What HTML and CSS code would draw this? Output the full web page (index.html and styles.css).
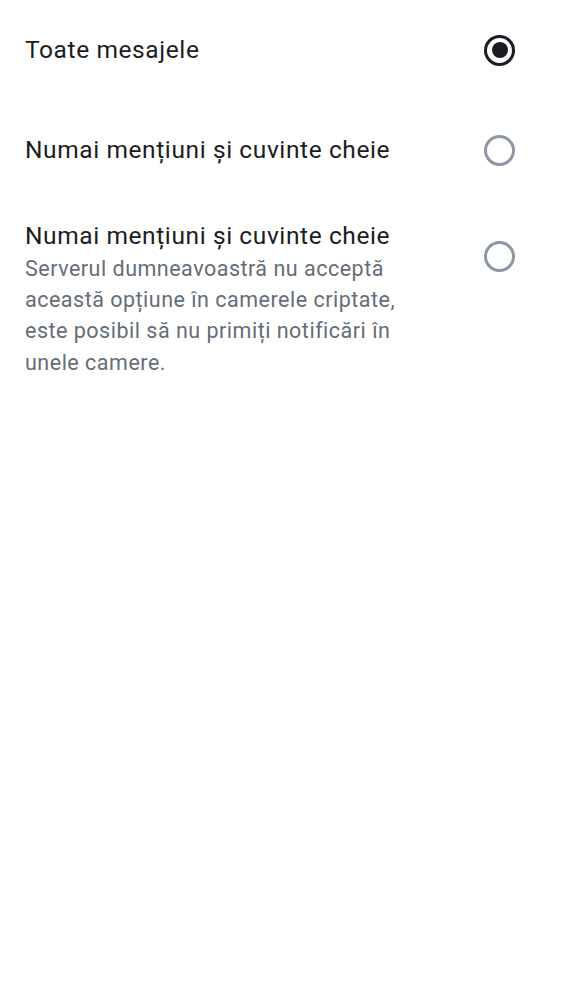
FILE: index.html
```html
<!DOCTYPE html>
<html lang="ro">
<head>
<meta charset="utf-8">
<link rel="stylesheet" href="styles.css">
</head>
<body>
<div class="list">
  <div class="row single">
    <div class="texts"><div class="title">Toate mesajele</div></div>
    <span class="radio checked"></span>
  </div>
  <div class="row single">
    <div class="texts"><div class="title">Numai mențiuni și cuvinte cheie</div></div>
    <span class="radio"></span>
  </div>
  <div class="row multi">
    <div class="texts">
      <div class="title">Numai mențiuni și cuvinte cheie</div>
      <div class="desc">Serverul dumneavoastră nu acceptă această opțiune în camerele criptate, este posibil să nu primiți notificări în unele camere.</div>
    </div>
    <span class="radio"></span>
  </div>
</div>
</body>
</html>
```
FILE: styles.css
```css
html, body {
  margin: 0;
  padding: 0;
  background: #ffffff;
}
body {
  font-family: Roboto, "Noto Sans", sans-serif;
  color: #1b1d22;
}
.list {
  display: flex;
  flex-direction: column;
}
.row {
  display: flex;
  justify-content: space-between;
  padding: 0 47px 0 25px;
}
.row.single {
  height: 100px;
  align-items: center;
}
.row.multi {
  padding-top: 21px;
  align-items: flex-start;
}
.texts {
  display: flex;
  flex-direction: column;
  width: 400px;
}
.title {
  font-size: 24.5px;
  line-height: 30px;
  letter-spacing: 0.6px;
}
.desc {
  margin-top: 1.5px;
  font-size: 21.5px;
  line-height: 31.4px;
  color: #656d77;
  letter-spacing: 0.5px;
}
.radio {
  box-sizing: border-box;
  width: 31px;
  height: 31px;
  border-radius: 50%;
  border: 3px solid #8d97a5;
  flex-shrink: 0;
  position: relative;
}
.row.multi .radio {
  margin-top: 20px;
}
.radio.checked {
  border-color: #1b1d22;
}
.radio.checked::after {
  content: "";
  position: absolute;
  left: 4.5px;
  top: 4.5px;
  width: 16px;
  height: 16px;
  border-radius: 50%;
  background: #1b1d22;
}
```
